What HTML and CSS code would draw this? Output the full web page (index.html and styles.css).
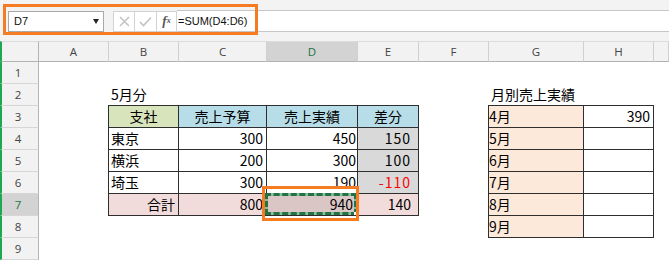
FILE: index.html
```html
<!DOCTYPE html>
<html lang="ja">
<head>
<meta charset="utf-8">
<title>Excel</title>
<link rel="stylesheet" href="styles.css">
</head>
<body>
<div class="app">
  <div class="fbar">
    <div class="namebox"><span>D7</span><svg class="dd" width="6" height="5" viewBox="0 0 6 5"><polygon points="0,0 6,0 3,5" fill="#222"/></svg></div>
    <div class="btns">
      <div class="btn"><svg width="11" height="11" viewBox="0 0 11 11"><path d="M1 1 L10 10 M10 1 L1 10" stroke="#c2c2c2" stroke-width="1.5" fill="none"/></svg></div>
      <div class="btn w22"><svg width="13" height="11" viewBox="0 0 13 11"><path d="M1 6 L4.5 9.5 L12 1.5" stroke="#c2c2c2" stroke-width="1.6" fill="none"/></svg></div>
      <div class="btn w20 fx"><i>f</i><sub>x</sub></div>
    </div>
    <div class="formula">=SUM(D4:D6)</div>
    <span class="callout"></span>
  </div>

  <div class="sheet">
    <div class="ch corner"></div>
    <div class="ch">A</div>
    <div class="ch">B</div>
    <div class="ch">C</div>
    <div class="ch sel">D</div>
    <div class="ch">E</div>
    <div class="ch">F</div>
    <div class="ch">G</div>
    <div class="ch">H</div>
    <div class="ch"></div>

    <div class="rh r1">1</div>
    <div class="rh r2">2</div>
    <div class="rh r3">3</div>
    <div class="rh r4">4</div>
    <div class="rh r5">5</div>
    <div class="rh r6">6</div>
    <div class="rh r7 sel">7</div>
    <div class="rh r8">8</div>
    <div class="rh r9">9</div>

    <div class="title t-b">5月分</div>
    <div class="title t-g">月別売上実績</div>

    <div class="tbl t1">
      <div class="c hd-g ctr">支社</div>
      <div class="c hd-b ctr">売上予算</div>
      <div class="c hd-b ctr">売上実績</div>
      <div class="c hd-b ctr">差分</div>

      <div class="c">東京</div>
      <div class="c num">300</div>
      <div class="c num nd">450</div>
      <div class="c num ne gray">150</div>

      <div class="c">横浜</div>
      <div class="c num">200</div>
      <div class="c num nd">300</div>
      <div class="c num ne gray">100</div>

      <div class="c">埼玉</div>
      <div class="c num">300</div>
      <div class="c num nd">190</div>
      <div class="c num ne gray red">-110</div>

      <div class="c num pink">合計</div>
      <div class="c num pink">800</div>
      <div class="c num pink d7">940<span class="ants"></span><span class="handle"></span><span class="mark"></span></div>
      <div class="c num ne pink">140</div>
    </div>

    <div class="tbl t2">
      <div class="c peach m">4月</div><div class="c num">390</div>
      <div class="c peach m">5月</div><div class="c"></div>
      <div class="c peach m">6月</div><div class="c"></div>
      <div class="c peach m">7月</div><div class="c"></div>
      <div class="c peach m">8月</div><div class="c"></div>
      <div class="c peach m">9月</div><div class="c"></div>
    </div>
  </div>
</div>
</body>
</html>
```

FILE: styles.css
```css
* { box-sizing: border-box; }
html, body { margin: 0; padding: 0; background: #fff; }
body {
  width: 669px;
  height: 260px;
  overflow: hidden;
  font-family: "Noto Sans CJK JP", sans-serif;
}

/* formula bar */
.fbar {
  position: relative;
  height: 41px;
  background: #f3f3f3;
  display: flex;
  align-items: flex-start;
  padding: 11px 0 0 8px;
}
.namebox {
  width: 96px;
  height: 21px;
  background: #fff;
  border: 1px solid #a9a9a9;
  display: flex;
  align-items: center;
  justify-content: space-between;
  padding: 0 4px 0 5px;
  font: 11px/1 "Liberation Sans", Arial, sans-serif;
  color: #111;
}
.btns {
  margin-left: 9px;
  height: 21px;
  display: flex;
  background: #fff;
  border: 1px solid #d2d2d2;
  border-right: 0;
}
.btn {
  width: 21px;
  height: 19px;
  border-right: 1px solid #d2d2d2;
  display: flex;
  align-items: center;
  justify-content: center;
}
.btn.w22 { width: 22px; }
.btn.w20 { width: 20px; }
.fx {
  font-family: "Liberation Serif", serif;
  color: #555;
  font-size: 13px;
  line-height: 1;
  padding-bottom: 2px;
}
.fx i { font-weight: bold; }
.fx sub { font-size: 8px; font-style: italic; font-weight: bold; vertical-align: -2px; }
.formula {
  flex: 1;
  height: 22px;
  margin-top: -1px;
  background: #fff;
  border-top: 1px solid #c6c6c6;
  border-bottom: 1px solid #c6c6c6;
  padding-left: 1px;
  font: 11px/20px "Liberation Sans", Arial, sans-serif;
  color: #111;
}
.callout {
  position: absolute;
  left: 3px;
  top: 4px;
  width: 255px;
  height: 31px;
  border: 3px solid #f57c22;
}

/* sheet grid */
.sheet {
  display: grid;
  grid-template-columns: 39px 70px 70px 88px 91px 61px 70px 95px 70px 1fr;
  grid-template-rows: 21px repeat(9, 22px);
}
.ch {
  background: #f2f2f2;
  border-top: 1px solid #dcdcdc;
  border-right: 1px solid #d0d0d0;
  border-bottom: 1px solid #b3b3b3;
  font: 11.5px/19px "Open Sans", sans-serif;
  color: #444;
  text-align: center;
}
.ch.corner {
  border-left: 2px solid #1ea84f;
  border-right-color: #b3b3b3;
}
.rh {
  grid-column: 1;
  background: #f2f2f2;
  border-left: 2px solid #1ea84f;
  border-right: 1px solid #b3b3b3;
  border-bottom: 1px solid #d6d6d6;
  font: 11.5px/21px "Open Sans", sans-serif;
  color: #444;
  text-align: center;
  padding-right: 4px;
}
.r1 { grid-row: 2; }
.r2 { grid-row: 3; }
.r3 { grid-row: 4; }
.r4 { grid-row: 5; }
.r5 { grid-row: 6; }
.r6 { grid-row: 7; }
.r7 { grid-row: 8; }
.r8 { grid-row: 9; }
.r9 { grid-row: 10; }
.sel { background: #d3d3d3; color: #217346; }

.title {
  grid-row: 3;
  font-size: 14px;
  line-height: 21px;
  padding-left: 2px;
  white-space: nowrap;
  color: #000;
}
.t-b { grid-column: 3; }
.t-g { grid-column: 8; }

/* data tables */
.tbl {
  display: grid;
  margin: -1px 0 0 -1px;
  border-left: 1px solid #2e2e2e;
  border-top: 1px solid #2e2e2e;
}
.t1 {
  grid-column: 3 / 7;
  grid-row: 4 / 9;
  grid-template-columns: 70px 88px 91px 61px;
  grid-template-rows: repeat(5, 22px);
}
.t2 {
  grid-column: 8 / 10;
  grid-row: 4 / 11;
  grid-template-columns: 95px 70px;
  grid-template-rows: repeat(6, 22px);
  align-self: start;
  height: 133px;
}
.c {
  border-right: 1px solid #2e2e2e;
  border-bottom: 1px solid #2e2e2e;
  font-size: 14px;
  line-height: 21px;
  padding: 0 2px;
  white-space: nowrap;
  color: #000;
  background: #fff;
}
.ctr { text-align: center; }
.num { text-align: right; padding-right: 3px; }
.nd { padding-right: 1px; }
.ne { padding-right: 7px; }
.gray { background: #d9d9d9; letter-spacing: 1px; }
.red { color: #ff0000; }
.hd-g { background: #d8e4bc; }
.hd-b { background: #b7dee8; }
.pink { background: #f2dcdb; }
.peach { background: #fde9d9; }
.m { padding-left: 0; }

.d7 {
  position: relative;
  background: #dbc6c6;
  padding-right: 4px;
}
.ants {
  position: absolute;
  left: -2px;
  top: -1px;
  right: 0;
  bottom: 0;
  border: 3px solid #8dbf9c;
}
.ants::after {
  content: "";
  position: absolute;
  inset: -3px;
  border: 3px dashed #217346;
}
.handle {
  position: absolute;
  right: 0;
  bottom: 0;
  width: 3px;
  height: 3px;
  background: #fff;
}
.mark {
  position: absolute;
  left: -5px;
  top: -8px;
  right: -2px;
  bottom: -6px;
  border: 3px solid #f57c22;
}
```
